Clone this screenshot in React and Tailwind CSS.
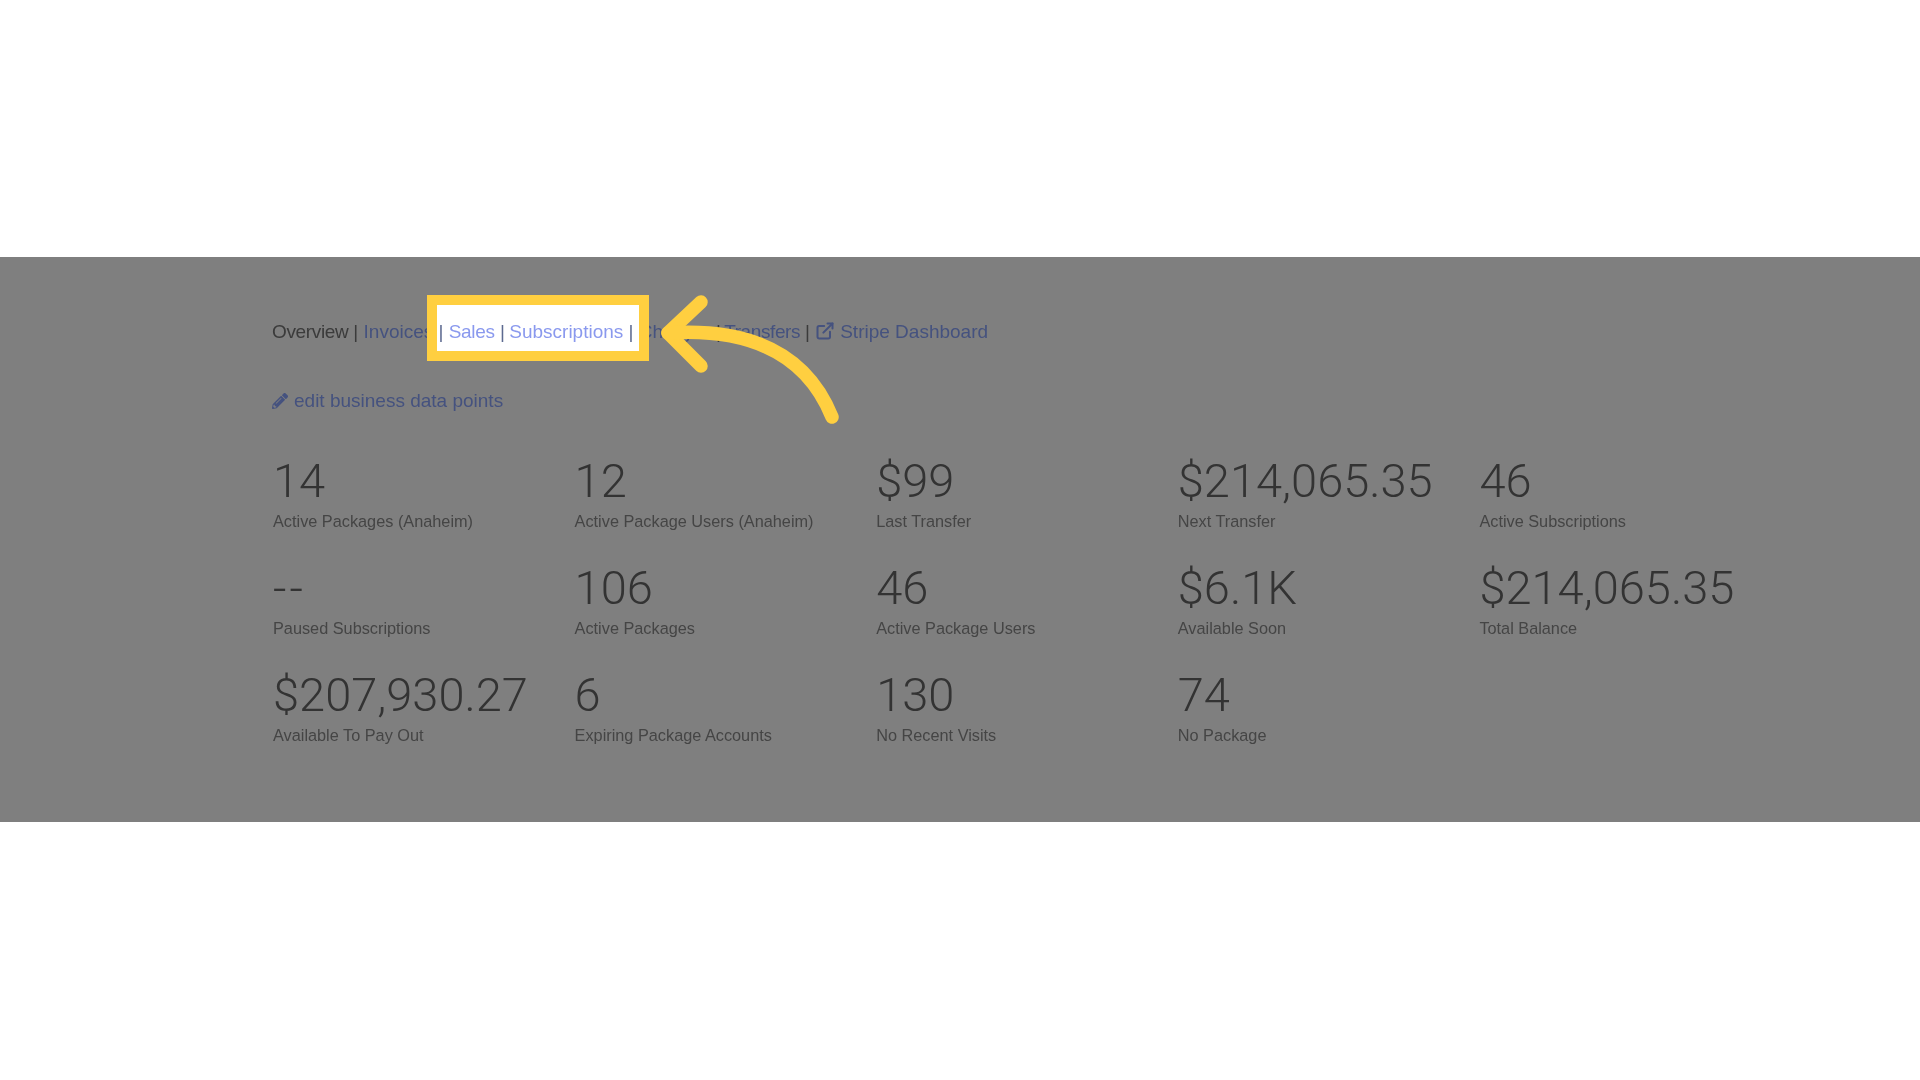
import React from "react";
import { FaPencilAlt } from "react-icons/fa";
import { ExternalLink } from "lucide-react";

const stats = [
  ["14", "Active Packages (Anaheim)"],
  ["12", "Active Package Users (Anaheim)"],
  ["$99", "Last Transfer"],
  ["$214,065.35", "Next Transfer"],
  ["46", "Active Subscriptions"],
  ["--", "Paused Subscriptions", "tracking-[3px]"],
  ["106", "Active Packages"],
  ["46", "Active Package Users"],
  ["$6.1K", "Available Soon"],
  ["$214,065.35", "Total Balance"],
  ["$207,930.27", "Available To Pay Out"],
  ["6", "Expiring Package Accounts"],
  ["130", "No Recent Visits"],
  ["74", "No Package"],
];

export default function App() {
  return (
    <div className="min-h-screen bg-white flex flex-col font-['Liberation_Sans',sans-serif]">
      <div className="h-[257px]" />
      <section className="relative h-[565px] bg-[#7f7f7f] pl-[272px] pt-[62px]">
        <nav className="flex items-center h-[26px] text-[19px] leading-[26px] text-[#3b3b3b] whitespace-pre">
          <span className="blur-[0.6px] tracking-[-0.35px]">Overview </span>
          <span className="blur-[0.6px]">| </span>
          <span className="blur-[0.6px] text-[#45527f]">Invoices </span>
          <span className="relative isolate z-10 text-[#5d6a90]">
            <span className="absolute -z-10 left-[-12px] right-[-15px] top-[-24px] bottom-[-16px] bg-white border-[10px] border-[#ffcf40]" />
            <span className="blur-[0.6px]">{"| "}</span>
            <span className="blur-[0.6px] text-[#8a99ee] tracking-[-0.3px]">Sales</span>
            <span className="blur-[0.6px]">{" | "}</span>
            <span className="blur-[0.6px] text-[#8a99ee] -ml-[1px]">Subscriptions</span>
            <span className="blur-[0.6px]">{" |"}</span>
          </span>
          <span className="blur-[0.6px] text-[#45527f]"> Charges </span>
          <span className="blur-[0.6px]">| </span>
          <span className="blur-[0.6px] text-[#45527f] tracking-[-0.4px] -ml-[2px]">Transfers </span>
          <span className="blur-[0.6px]">| </span>
          <span className="flex items-center text-[#45527f] blur-[0.6px]">
            <ExternalLink size={20} strokeWidth={2.4} className="mr-[5px] -mt-[3px]" />
            Stripe Dashboard
          </span>
        </nav>
        <a className="mt-[43px] flex items-center h-[26px] text-[19px] text-[#45527f] blur-[0.6px]">
          <FaPencilAlt size={16} className="mr-[6px]" />
          edit business data points
        </a>
        <div className="mt-[42px] ml-[1px] grid grid-cols-[repeat(5,301.6px)] auto-rows-[107px] blur-[0.6px]">
          {stats.map(([value, label, extra], i) => (
            <div key={i}>
              <div className={`text-[47px] leading-[50px] font-light font-['Roboto',sans-serif] text-[#333333] ${extra || ""}`}>{value}</div>
              <div className="mt-[4px] text-[16.3px] leading-[22px] text-[#454545]">{label}</div>
            </div>
          ))}
        </div>
        <svg
          className="absolute left-[650px] top-[35px] w-[200px] h-[140px]"
          viewBox="650 292 200 140"
          fill="none"
          stroke="#ffcf40"
          strokeWidth="13.5"
          strokeLinecap="round"
          strokeLinejoin="round"
        >
          <path d="M701 302 L668 333 L701 366" />
          <path d="M668 333 C745 328 805 350 832 417" />
        </svg>
      </section>
    </div>
  );
}
